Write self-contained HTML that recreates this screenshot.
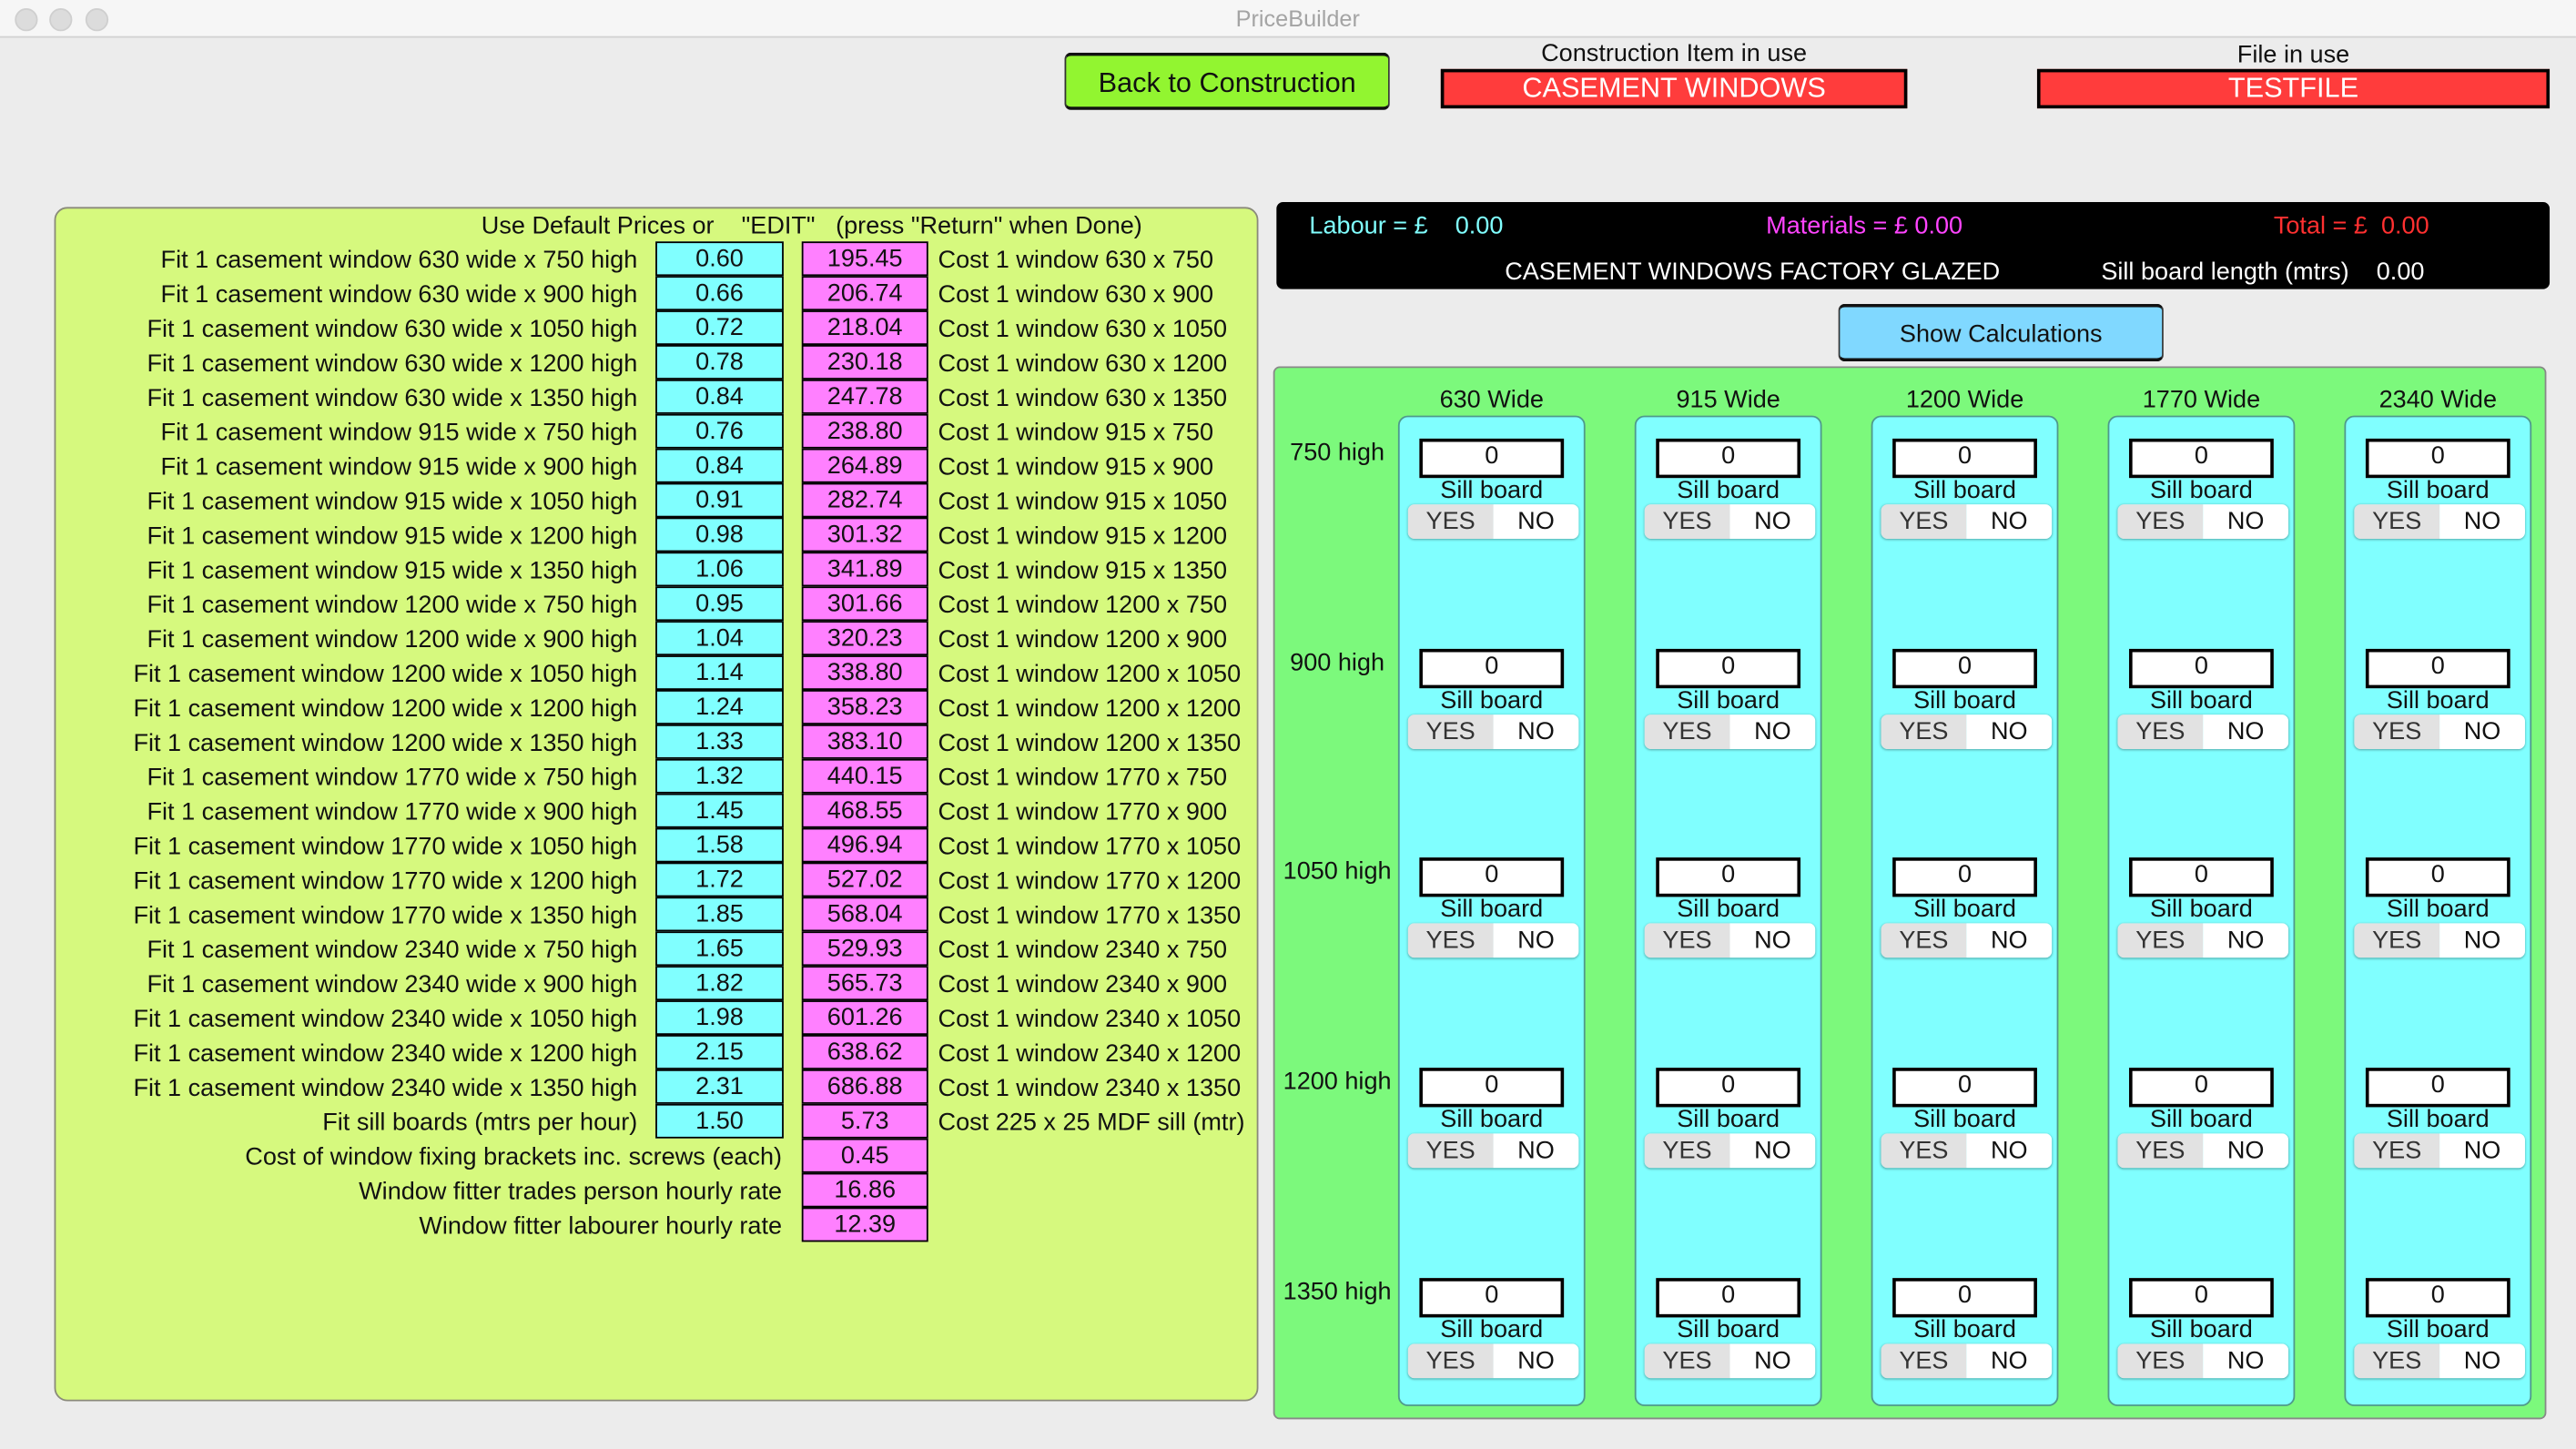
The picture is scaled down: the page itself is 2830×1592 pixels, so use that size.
<!DOCTYPE html>
<html><head><meta charset="utf-8">
<style>
html,body{margin:0;padding:0;width:2830px;height:1592px;overflow:hidden;background:#ececec;}
#w{position:absolute;left:0;top:0;width:1568px;height:882px;transform:scale(1.8048);transform-origin:0 0;font-family:"Liberation Sans",sans-serif;color:#111;font-size:15px;}
.a{position:absolute;}
.tb{left:0;top:0;width:1568px;height:22px;background:#f6f6f6;border-bottom:1px solid #d2d2d2;}
.dot{top:5px;width:12px;height:12px;border-radius:50%;background:#dcdcdc;border:0.5px solid #cfcfcf;}
.redbox{background:#ff3c3c;border:2px solid #000;color:#fff;font-size:17px;text-align:center;line-height:20px;box-sizing:border-box;}
.lp{left:33px;top:126px;width:733px;height:727px;background:#d6f97e;border:1px solid #8a8a7a;border-radius:8px;box-sizing:border-box;}
.lbl{position:absolute;text-align:right;white-space:nowrap;}
.cy,.pk{position:absolute;width:74px;height:21px;box-sizing:border-box;border:1.5px solid #000;text-align:center;line-height:20px;}
.cy{left:399px;background:#80ffff;width:78px;}
.pk{left:488px;background:#ff80ff;width:77px;}
.cost{position:absolute;left:571px;white-space:nowrap;}
.bk{left:777px;top:123px;width:775px;height:53px;background:#000;border-radius:4px;}
.gp{left:775px;top:223px;width:775px;height:641px;background:#7cf97c;border:1px solid #888;border-radius:4px;box-sizing:border-box;}
.col{position:absolute;top:253px;width:114px;height:603px;background:#80ffff;border:1px solid #4f9a8c;border-radius:6px;box-sizing:border-box;}
.blk{position:absolute;left:0;width:112px;height:64px;}
.inp{position:absolute;left:12px;top:0;width:88px;height:24px;background:#fff;border:2px solid #000;box-sizing:border-box;text-align:center;line-height:18px;}
.sb{position:absolute;left:0;width:112px;top:23px;text-align:center;line-height:18px;}
.seg{position:absolute;left:5px;top:40px;width:104px;height:21px;border-radius:4px;overflow:hidden;box-shadow:0 0.5px 1.5px rgba(0,0,0,.35);display:flex;}
.seg span{display:block;width:52px;text-align:center;line-height:21px;}
.seg .y{background:#e2e2e2;color:#333;}
.seg .n{background:#fff;}
.ch{position:absolute;top:235px;width:114px;text-align:center;}
.rh{position:absolute;left:779px;width:70px;text-align:center;}
</style></head><body><div id="w">
<div class="a tb"></div>
<div class="a dot" style="left:9px"></div><div class="a dot" style="left:30px"></div><div class="a dot" style="left:52px"></div>
<div class="a" style="left:690px;width:200px;top:3px;text-align:center;color:#a4a4a4;font-size:14px;">PriceBuilder</div>

<div class="a" style="left:648px;top:32px;width:198px;height:35px;background:#92f530;border:1px solid #333;border-top:2px solid #111;border-bottom:2px solid #111;border-radius:4px;box-sizing:border-box;text-align:center;line-height:34px;font-size:17px;">Back to Construction</div>
<div class="a" style="left:877px;top:24px;width:284px;text-align:center;">Construction Item in use</div>
<div class="a redbox" style="left:877px;top:42px;width:284px;height:24px;">CASEMENT WINDOWS</div>
<div class="a" style="left:1240px;top:25px;width:312px;text-align:center;">File in use</div>
<div class="a redbox" style="left:1240px;top:42px;width:312px;height:24px;">TESTFILE</div>

<div class="a lp"></div>
<div class="a" style="left:293px;top:129px;white-space:pre;">Use Default Prices or    "EDIT"   (press "Return" when Done)</div>

<div id="rows"></div>

<div class="a bk"></div>
<div class="a" style="left:797px;top:129px;color:#80ffff;white-space:pre;">Labour = £    0.00</div>
<div class="a" style="left:1075px;top:129px;color:#ff44ff;white-space:pre;">Materials = £ 0.00</div>
<div class="a" style="left:1384px;top:129px;color:#ff3030;white-space:pre;">Total = £  0.00</div>
<div class="a" style="left:916px;top:157px;color:#fff;white-space:pre;">CASEMENT WINDOWS FACTORY GLAZED</div>
<div class="a" style="left:1279px;top:157px;color:#fff;white-space:pre;">Sill board length (mtrs)    0.00</div>

<div class="a" style="left:1119px;top:185px;width:198px;height:35px;background:#80d8ff;border:1px solid #333;border-top:2px solid #111;border-bottom:2px solid #111;border-radius:4px;box-sizing:border-box;text-align:center;line-height:33px;">Show Calculations</div>

<div class="a gp"></div>
<div id="grid"></div>
</div>
<script>
var rows=[
["Fit 1 casement window 630 wide x 750 high","0.60","195.45","Cost 1 window 630 x 750"],
["Fit 1 casement window 630 wide x 900 high","0.66","206.74","Cost 1 window 630 x 900"],
["Fit 1 casement window 630 wide x 1050 high","0.72","218.04","Cost 1 window 630 x 1050"],
["Fit 1 casement window 630 wide x 1200 high","0.78","230.18","Cost 1 window 630 x 1200"],
["Fit 1 casement window 630 wide x 1350 high","0.84","247.78","Cost 1 window 630 x 1350"],
["Fit 1 casement window 915 wide x 750 high","0.76","238.80","Cost 1 window 915 x 750"],
["Fit 1 casement window 915 wide x 900 high","0.84","264.89","Cost 1 window 915 x 900"],
["Fit 1 casement window 915 wide x 1050 high","0.91","282.74","Cost 1 window 915 x 1050"],
["Fit 1 casement window 915 wide x 1200 high","0.98","301.32","Cost 1 window 915 x 1200"],
["Fit 1 casement window 915 wide x 1350 high","1.06","341.89","Cost 1 window 915 x 1350"],
["Fit 1 casement window 1200 wide x 750 high","0.95","301.66","Cost 1 window 1200 x 750"],
["Fit 1 casement window 1200 wide x 900 high","1.04","320.23","Cost 1 window 1200 x 900"],
["Fit 1 casement window 1200 wide x 1050 high","1.14","338.80","Cost 1 window 1200 x 1050"],
["Fit 1 casement window 1200 wide x 1200 high","1.24","358.23","Cost 1 window 1200 x 1200"],
["Fit 1 casement window 1200 wide x 1350 high","1.33","383.10","Cost 1 window 1200 x 1350"],
["Fit 1 casement window 1770 wide x 750 high","1.32","440.15","Cost 1 window 1770 x 750"],
["Fit 1 casement window 1770 wide x 900 high","1.45","468.55","Cost 1 window 1770 x 900"],
["Fit 1 casement window 1770 wide x 1050 high","1.58","496.94","Cost 1 window 1770 x 1050"],
["Fit 1 casement window 1770 wide x 1200 high","1.72","527.02","Cost 1 window 1770 x 1200"],
["Fit 1 casement window 1770 wide x 1350 high","1.85","568.04","Cost 1 window 1770 x 1350"],
["Fit 1 casement window 2340 wide x 750 high","1.65","529.93","Cost 1 window 2340 x 750"],
["Fit 1 casement window 2340 wide x 900 high","1.82","565.73","Cost 1 window 2340 x 900"],
["Fit 1 casement window 2340 wide x 1050 high","1.98","601.26","Cost 1 window 2340 x 1050"],
["Fit 1 casement window 2340 wide x 1200 high","2.15","638.62","Cost 1 window 2340 x 1200"],
["Fit 1 casement window 2340 wide x 1350 high","2.31","686.88","Cost 1 window 2340 x 1350"],
["Fit sill boards (mtrs per hour)","1.50","5.73","Cost 225 x 25 MDF sill (mtr)"],
["Cost of window fixing brackets inc. screws (each)",null,"0.45",""],
["Window fitter trades person hourly rate",null,"16.86",""],
["Window fitter labourer hourly rate",null,"12.39",""]];
var h="";
rows.forEach(function(r,i){
 var t=147+i*21;
 var right=r[1]===null?1568-476:1568-388;
 h+='<div class="lbl" style="right:'+right+'px;top:'+(t+1)+'px;line-height:21px">'+r[0]+'</div>';
 if(r[1]!==null)h+='<div class="cy" style="top:'+t+'px">'+r[1]+'</div>';
 h+='<div class="pk" style="top:'+t+'px">'+r[2]+'</div>';
 if(r[3])h+='<div class="cost" style="top:'+(t+1)+'px;line-height:21px">'+r[3]+'</div>';
});
document.getElementById('rows').innerHTML=h;
var g="",ws=["630","915","1200","1770","2340"],hs=["750","900","1050","1200","1350"],offs=[13,141,268,396,524];
ws.forEach(function(w,c){
 var L=851+c*144;
 g+='<div class="ch" style="left:'+L+'px">'+w+' Wide</div><div class="col" style="left:'+L+'px">';
 offs.forEach(function(o){g+='<div class="blk" style="top:'+o+'px"><div class="inp">0</div><div class="sb">Sill board</div><div class="seg"><span class="y">YES</span><span class="n">NO</span></div></div>';});
 g+='</div>';
});
hs.forEach(function(x,i){g+='<div class="rh" style="top:'+(267+[0,128,255,383,511][i])+'px">'+x+' high</div>';});
document.getElementById('grid').innerHTML=g;
</script>
</body></html>
